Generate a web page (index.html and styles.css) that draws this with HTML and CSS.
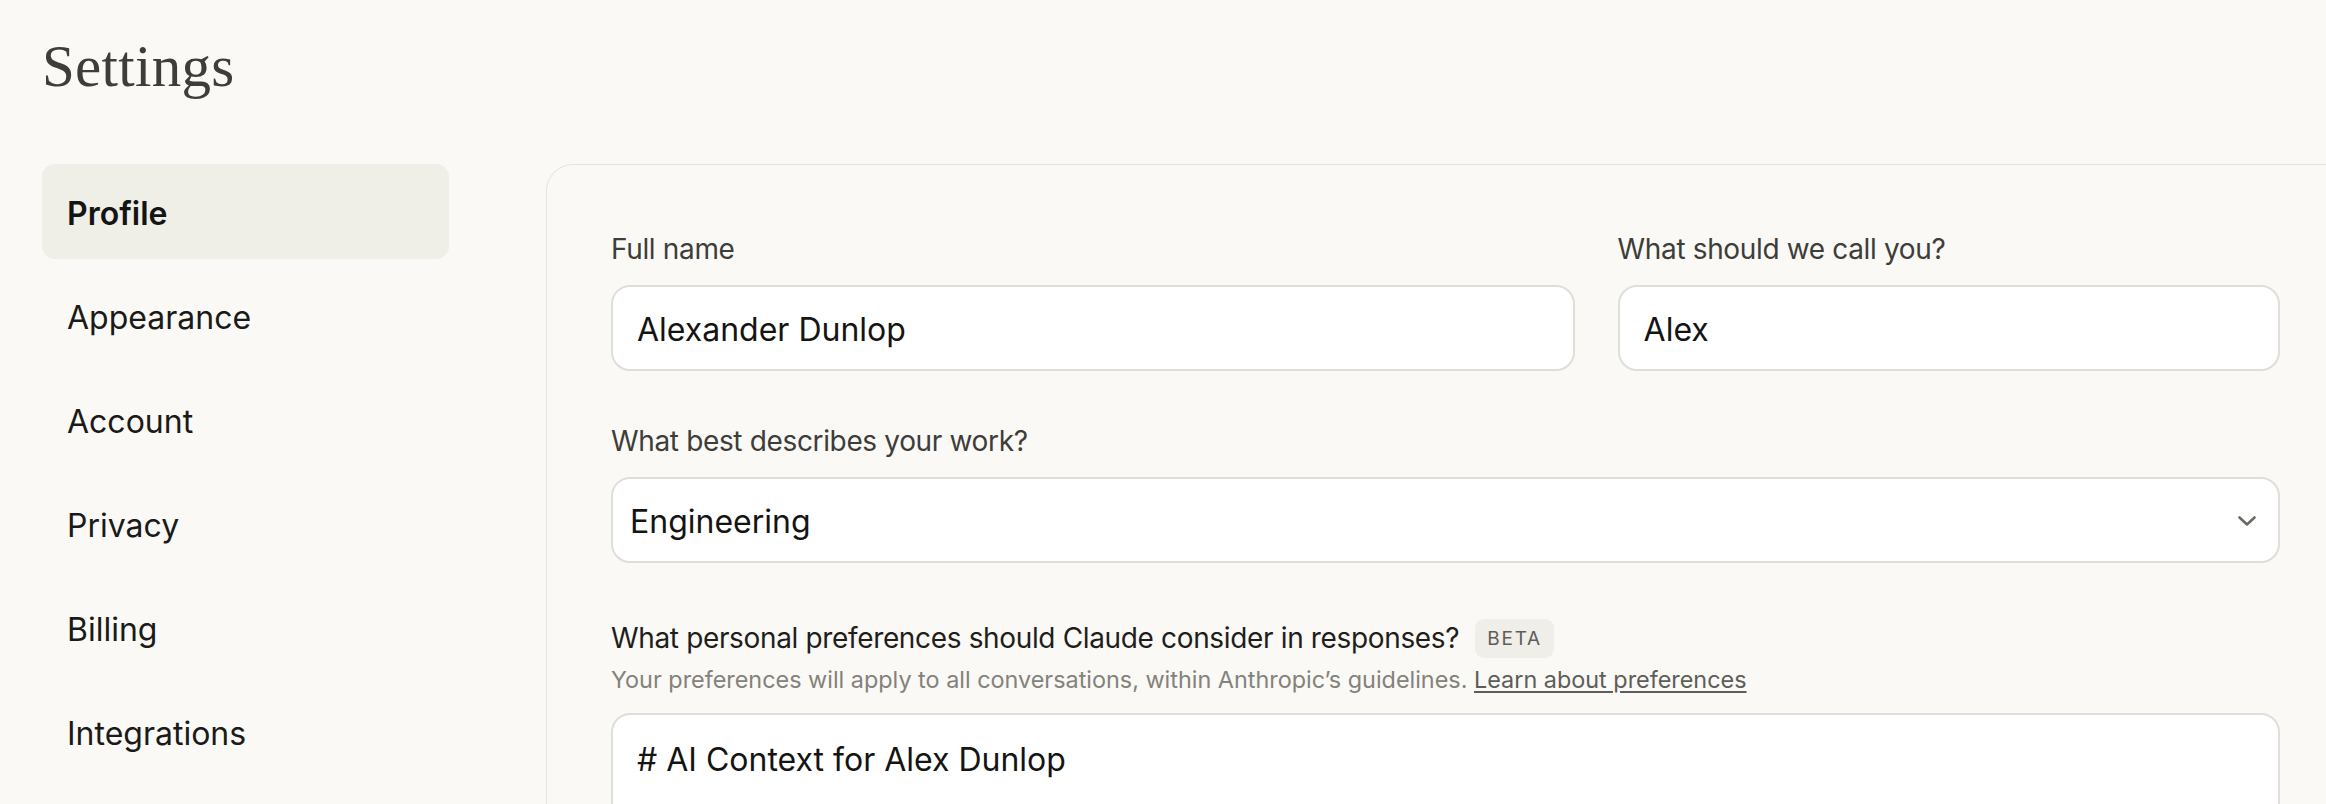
FILE: index.html
```html
<!DOCTYPE html>
<html lang="en">
<head>
<meta charset="utf-8">
<title>Settings</title>
<link rel="stylesheet" href="styles.css">
</head>
<body>
<div class="page">
  <h1 class="title">Settings</h1>
  <div class="layout">
    <nav class="sidebar">
      <a class="nav-item active">Profile</a>
      <a class="nav-item">Appearance</a>
      <a class="nav-item">Account</a>
      <a class="nav-item">Privacy</a>
      <a class="nav-item">Billing</a>
      <a class="nav-item">Integrations</a>
    </nav>
    <main class="panel">
      <div class="row-two">
        <div class="field">
          <label class="label">Full name</label>
          <input class="input" type="text" value="Alexander Dunlop">
        </div>
        <div class="field">
          <label class="label">What should we call you?</label>
          <input class="input" type="text" value="Alex">
        </div>
      </div>
      <div class="field">
        <label class="label">What best describes your work?</label>
        <div class="select">
          <span class="select-value">Engineering</span>
          <svg class="chevron" width="20" height="12" viewBox="0 0 20 12"><path d="M2.5 2.5 L10 9.5 L17.5 2.5" fill="none" stroke="#6b6a65" stroke-width="2.6" stroke-linecap="round" stroke-linejoin="round"/></svg>
        </div>
      </div>
      <div class="field">
        <div class="label-row">
          <label class="label strong">What personal preferences should Claude consider in responses?</label>
          <span class="badge">BETA</span>
        </div>
        <p class="help">Your preferences will apply to all conversations, within Anthropic’s guidelines. <a class="link">Learn about preferences</a></p>
        <textarea class="textarea"># AI Context for Alex Dunlop</textarea>
      </div>
    </main>
  </div>
</div>
</body>
</html>
```
FILE: styles.css
```css
html, body {
  margin: 0;
  padding: 0;
  background: #faf9f5;
  height: 804px;
  overflow: hidden;
}

body {
  font-family: Inter, "Noto Sans", sans-serif;
  color: #1f1e1d;
}

.page {
  padding: 31px 0 0 42px;
}

.title {
  margin: 0;
  font-family: "Liberation Serif", "Times New Roman", serif;
  font-weight: 400;
  font-size: 59px;
  line-height: 70px;
  color: #3d3d3a;
  letter-spacing: 0.3px;
}

.layout {
  display: flex;
  gap: 97px;
  margin-top: 63px;
}

.sidebar {
  width: 407px;
  flex: none;
  display: flex;
  flex-direction: column;
  gap: 9px;
}

.nav-item {
  box-sizing: border-box;
  height: 95px;
  display: flex;
  align-items: center;
  padding: 3px 0 0 25px;
  border-radius: 13px;
  font-size: 32px;
  color: #1a1a19;
  cursor: pointer;
}

.nav-item.active {
  background: #efeee7;
  font-weight: 600;
  color: #141413;
}

.panel {
  flex: 1;
  min-width: 0;
  border-top: 1.5px solid #e6e4dd;
  border-left: 1.5px solid #e6e4dd;
  border-top-left-radius: 27px;
  padding: 64px 46px 0 64px;
  display: flex;
  flex-direction: column;
  gap: 50px;
  height: 800px;
}

.row-two {
  display: grid;
  grid-template-columns: 963fr 662fr;
  gap: 43px;
}

.field {
  display: flex;
  flex-direction: column;
}

.label {
  font-size: 28px;
  line-height: 40px;
  letter-spacing: -0.35px;
  color: #3d3d3a;
  margin-bottom: 16px;
}

.label.strong {
  color: #1f1e1d;
  margin-bottom: 0;
}

.input {
  box-sizing: border-box;
  height: 86px;
  width: 100%;
  border: 2px solid #e0ded8;
  border-radius: 19px;
  background: #ffffff;
  padding: 2px 24px 0;
  font-family: Inter, "Noto Sans", sans-serif;
  font-size: 32px;
  color: #141413;
  outline: none;
}

.select {
  box-sizing: border-box;
  height: 86px;
  border: 2px solid #e0ded8;
  border-radius: 19px;
  background: #ffffff;
  padding: 2px 21px 0 17px;
  display: flex;
  align-items: center;
  justify-content: space-between;
}

.select-value {
  font-size: 32px;
  color: #141413;
}

.chevron {
  display: block;
}

.label-row {
  display: flex;
  align-items: center;
  gap: 16px;
  min-height: 50px;
}

.badge {
  height: 39px;
  display: flex;
  align-items: center;
  padding: 0 12px;
  border-radius: 9px;
  background: #efeee8;
  color: #5e5d59;
  font-size: 19px;
  letter-spacing: 1.8px;
}

.help {
  margin: 1px 0 17px;
  font-size: 23.4px;
  line-height: 32px;
  color: #83827b;
}

.link {
  color: #5e5d59;
  text-decoration: underline;
  text-underline-offset: 3px;
  cursor: pointer;
}

.textarea {
  box-sizing: border-box;
  height: 240px;
  width: 100%;
  border: 2px solid #e0ded8;
  border-radius: 19px;
  background: #ffffff;
  padding: 25px 24px;
  font-family: Inter, "Noto Sans", sans-serif;
  font-size: 32px;
  line-height: 39px;
  color: #141413;
  resize: none;
  outline: none;
}
```
